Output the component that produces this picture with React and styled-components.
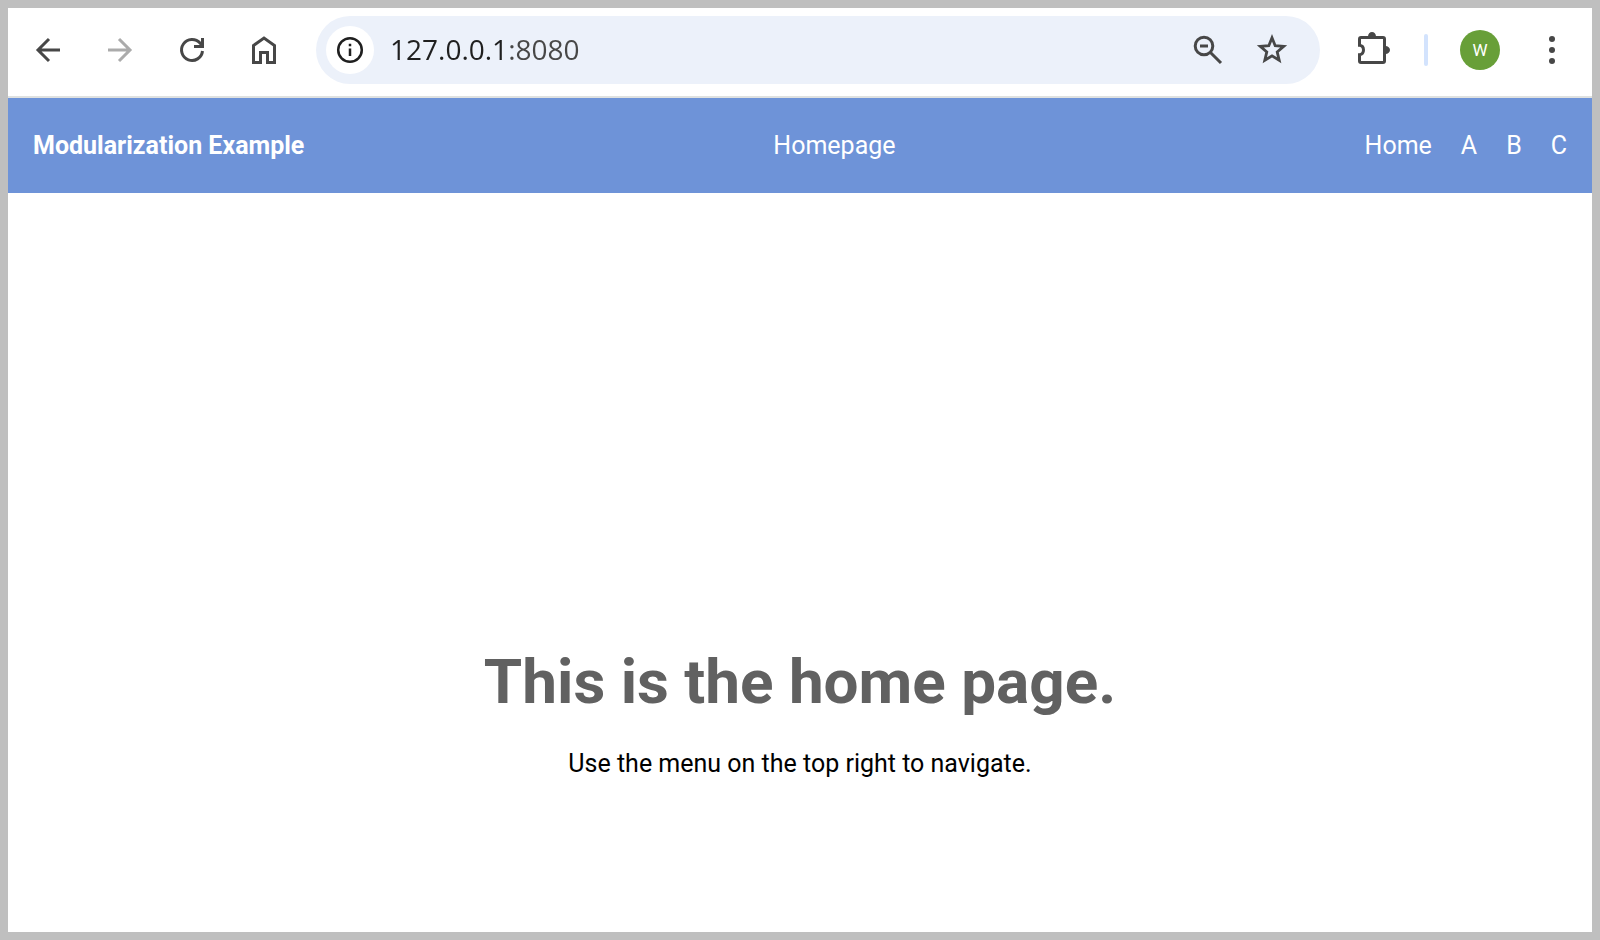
import React from 'react'
import styled, { createGlobalStyle } from 'styled-components'

const links = ['Home', 'A', 'B', 'C']

const BackIcon = () => (
  <Icon viewBox='0 0 48 48'>
    <path d='M36 24H14M25 13L14 24l11 11' />
  </Icon>
)

const ForwardIcon = () => (
  <Icon viewBox='0 0 48 48'>
    <path d='M12 24h22M23 13l11 11-11 11' />
  </Icon>
)

const ReloadIcon = () => (
  <Icon viewBox='0 0 48 48'>
    <path d='M34.5 25A10.5 10.5 0 1 1 32 17.1l3 3.4M34.5 12v8.5H26' />
  </Icon>
)

const HomeIcon = () => (
  <Icon viewBox='0 0 48 48'>
    <path d='M13.5 36.5v-17L24 12l10.5 7.500v17h-7v-10h-7v10z' />
  </Icon>
)

const InfoIcon = () => (
  <Icon viewBox='0 0 48 48'>
    <circle cx='24' cy='24' r='11.8' strokeWidth='2.5' />
    <path d='M24 22.4V30M24 17.8v2.4' strokeWidth='2.5' />
  </Icon>
)

const ZoomOutIcon = () => (
  <Icon viewBox='0 0 48 48'>
    <circle cx='20' cy='20' r='8.8' />
    <path d='M26.2 26.2L37 37M16 20h8' />
  </Icon>
)

const StarIcon = () => (
  <Icon viewBox='0 0 48 48'>
    <path
      d='M24 11.8l3.2 7.9 8.5.7-6.5 5.5 2 8.4L24 29.8l-7.2 4.5 2-8.4-6.5-5.5 8.5-.7z'
      strokeWidth='2.8'
    />
  </Icon>
)

const ExtensionsIcon = () => (
  <Icon viewBox='0 0 48 48'>
    <path d='M13 11.5h22a1.5 1.5 0 0 1 1.5 1.5v22a1.5 1.5 0 0 1-1.5 1.5H13a1.5 1.5 0 0 1-1.5-1.5v-6.3c2.500-.3 4-2.300 4-4.700s-1.500-4.400-4-4.700V13a1.500 1.500 0 0 1 1.500-1.500z' />
    <path
      d='M20 10.500a4 4.500 0 0 1 8 0zM37.500 20a4.500 4 0 0 1 0 8z'
      fill='currentColor'
      stroke='none'
    />
  </Icon>
)

const MoreIcon = () => (
  <Icon viewBox='0 0 48 48'>
    <g fill='currentColor' stroke='none'>
      <circle cx='24' cy='13' r='3' />
      <circle cx='24' cy='24' r='3' />
      <circle cx='24' cy='35' r='3' />
    </g>
  </Icon>
)

const Toolbar = () => {
  return (
    <ToolbarWrapper>
      <NavButtons>
        <IconButton type='button' aria-label='Back'>
          <BackIcon />
        </IconButton>
        <IconButton type='button' aria-label='Forward' disabled>
          <ForwardIcon />
        </IconButton>
        <IconButton type='button' aria-label='Reload'>
          <ReloadIcon />
        </IconButton>
        <IconButton type='button' aria-label='Home'>
          <HomeIcon />
        </IconButton>
      </NavButtons>
      <AddressBar>
        <InfoButton type='button' aria-label='Site information'>
          <InfoIcon />
        </InfoButton>
        <AddressInput
          type='text'
          aria-label='Address'
          spellCheck={false}
          defaultValue='127.0.0.1:8080'
        />
        <AddressActions>
          <IconButton type='button' aria-label='Zoom'>
            <ZoomOutIcon />
          </IconButton>
          <IconButton type='button' aria-label='Bookmark'>
            <StarIcon />
          </IconButton>
        </AddressActions>
      </AddressBar>
      <IconButton type='button' aria-label='Extensions'>
        <ExtensionsIcon />
      </IconButton>
      <Divider />
      <Avatar type='button' aria-label='Profile'>
        W
      </Avatar>
      <IconButton type='button' aria-label='Menu'>
        <MoreIcon />
      </IconButton>
    </ToolbarWrapper>
  )
}

const Header = () => {
  return (
    <HeaderWrapper>
      <strong>Modularization Example</strong>
      <span>Homepage</span>
      <nav>
        {links.map((link) => (
          <a key={link} href={`#${link.toLowerCase()}`}>
            {link}
          </a>
        ))}
      </nav>
    </HeaderWrapper>
  )
}

const App = () => {
  return (
    <>
      <GlobalStyle />
      <Window>
        <Toolbar />
        <Header />
        <Main>
          <h1>This is the home page.</h1>
          <p>Use the menu on the top right to navigate.</p>
        </Main>
      </Window>
    </>
  )
}

const GlobalStyle = createGlobalStyle`
  * {
    box-sizing: border-box;
  }
  body {
    margin: 0;
    background: #fff;
    font-family: Roboto, sans-serif;
  }
  h1,
  p {
    margin: 0;
  }
`

const Window = styled.div`
  display: flex;
  flex-direction: column;
  min-height: 100vh;
  border: 8px solid #bfbfbf;
`

const ToolbarWrapper = styled.div`
  display: flex;
  align-items: center;
  gap: 28px;
  padding: 8px 16px 12px;
  border-bottom: 2px solid #dfe1e0;
  color: #474747;
`

const NavButtons = styled.div`
  display: flex;
  gap: 24px;
`

const Icon = styled.svg.attrs({ 'aria-hidden': true })`
  display: block;
  width: 48px;
  height: 48px;
  fill: none;
  stroke: currentColor;
  stroke-width: 3;
`

const IconButton = styled.button`
  padding: 0;
  border: none;
  border-radius: 50%;
  background: transparent;
  color: #474747;
  cursor: pointer;
  &:disabled {
    color: #ababab;
    cursor: default;
  }
`

const InfoButton = styled(IconButton)`
  background: #fff;
  color: #1f1f1f;
`

const AddressBar = styled.div`
  flex: 1;
  display: flex;
  align-items: center;
  min-width: 0;
  padding: 10px 24px 10px 10px;
  border-radius: 34px;
  background: #ecf1fa;
`

/* host is darker than the port */
const AddressInput = styled.input`
  flex: 1;
  min-width: 0;
  height: 48px;
  margin-left: 16px;
  padding: 0 0 2px;
  border: none;
  outline: none;
  background: linear-gradient(to right, #1f1f1f 118px, #474747 118px);
  background-clip: text;
  -webkit-background-clip: text;
  -webkit-text-fill-color: transparent;
  color: #1f1f1f;
  font-family: 'Open Sans', sans-serif;
  font-size: 28px;
`

const AddressActions = styled.div`
  display: flex;
  gap: 16px;
`

const Divider = styled.div`
  width: 4px;
  height: 32px;
  margin-right: 4px;
  border-radius: 2px;
  background: #d3e3fd;
`

const Avatar = styled.button`
  width: 40px;
  height: 40px;
  padding: 0;
  border: none;
  border-radius: 50%;
  background: #689f38;
  color: #fff;
  font-family: Roboto, sans-serif;
  font-size: 17px;
  cursor: pointer;
`

const HeaderWrapper = styled.header`
  display: flex;
  align-items: center;
  justify-content: space-between;
  padding: 32px 25px;
  background: #6e93d8;
  color: #fff;
  font-size: 25px;
  line-height: 31px;
  nav {
    display: flex;
    gap: 29px;
  }
  a {
    color: inherit;
    text-decoration: none;
  }
`

const Main = styled.main`
  flex: 1;
  display: flex;
  flex-direction: column;
  align-items: center;
  justify-content: flex-end;
  gap: 28px;
  padding: 32px 32px 150px;
  text-align: center;
  h1 {
    color: #616161;
    font-size: 62px;
    font-weight: 700;
    line-height: 72px;
  }
  p {
    color: #000;
    font-size: 25px;
    line-height: 36px;
  }
`

export default App
